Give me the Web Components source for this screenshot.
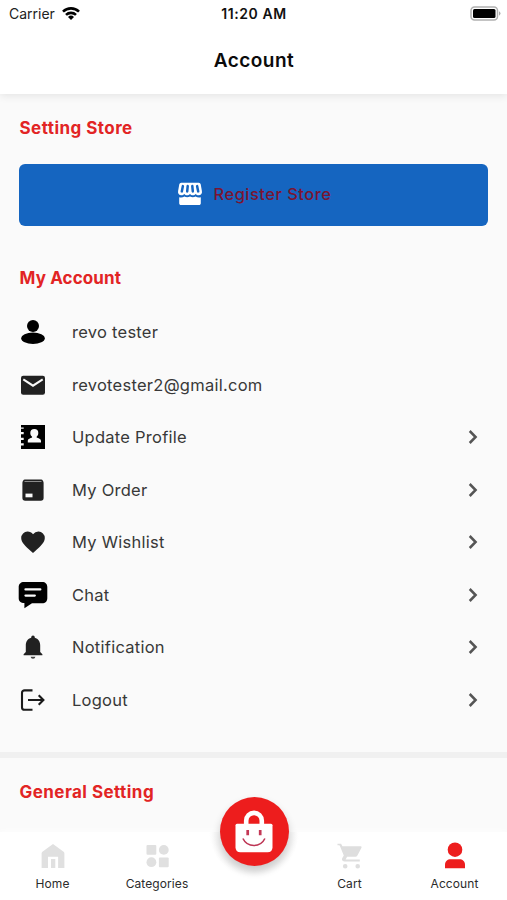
<!DOCTYPE html>
<html lang="en">
<head>
<meta charset="utf-8">
<meta name="viewport" content="width=device-width, initial-scale=1">
<title>Account</title>
<style>
html, body {
    margin: 0;
    height: 100%;
    overflow: hidden;
}
body {
    font-family: Inter, Roboto, "Liberation Sans", sans-serif;
    background: #fafafa;
    color: #333;
}
</style>
</head>
<body>
<account-page></account-page>

<script>
const icons = {
    user: `<g fill="#000"><circle cx="14" cy="8" r="6"/><ellipse cx="14" cy="20.300" rx="11.800" ry="5.700"/></g>`,
    mail: `<rect x="2" y="4.700" width="24" height="19" rx="2.200" fill="#212121"/><path d="M4.300 8.400 14 14.700l9.700-6.300" fill="none" stroke="#fafafa" stroke-width="2"/>`,
    profile: `<path d="M2 2h24v24H2v-3.500h2.700v-2.200H2v-3.400h2.700v-2.200H2v-3.400h2.700V9H2V5.800h2.700V4.600H2z" fill="#000"/><path d="M15.300 6a4 4 0 0 1 4 4c0 1.800-.8 3-1.700 3.800v.8c1.600.7 4.400 1.200 4.400 3.400v1.600H8.800V18c0-2.200 2.800-2.700 4.300-3.400v-.8c-1-.8-1.800-2-1.800-3.800a4 4 0 0 1 4-4z" fill="#fafafa"/>`,
    order: `<path d="M5.800 3.600h16.400c1.400 0 2.400 2 2.400 3.200V22c0 1.800-1 2.700-2.700 2.700H6.200c-1.800 0-2.800-.9-2.800-2.700V6.800c0-1.200 1-3.200 2.400-3.200z" fill="#212121"/><path d="M5.500 5.500h17" stroke="#a8a8a8" stroke-width=".8"/><rect x="6.500" y="17.600" width="7" height="3.700" fill="#fafafa"/>`,
    heart: `<path d="M14 25.100 12.300 23.600C6.200 18 2.200 14.400 2.200 10A6.300 6.300 0 0 1 8.600 3.600c2.100 0 4.100 1 5.400 2.600a7.200 7.200 0 0 1 5.400-2.600 6.300 6.300 0 0 1 6.400 6.400c0 4.400-4 8-10.100 13.600z" fill="#212121"/>`,
    chat: `<path d="M5 .9h18.300c3 0 5 2 5 5v11.300c0 3-2 5-5 5H13l-7.600 5v-5.100C1.700 22.100-.3 20-.3 17.200V5.900C-.3 2.900 1.800.9 5 .9z" fill="#000"/><path d="M6.500 8.400h14.800M6.500 14.600h9.300" stroke="#fafafa" stroke-width="2.300" stroke-linecap="round"/>`,
    bell: `<path d="M14 25.800a2.400 2.400 0 0 0 2.400-2.100h-4.800a2.400 2.400 0 0 0 2.400 2.100z" fill="#444"/><path d="M21.200 19v-6.700c0-3.900-2-6.800-5.400-7.600v-.3a1.800 1.800 0 0 0-3.600 0v.3c-3.400.8-5.400 3.700-5.400 7.600V19l-2.200 2.200v1h18.800v-1z" fill="#212121"/>`,
    logout: `<path d="M13.500 4.400H5.600C4 4.400 3 5.200 3 6.700v14.700c0 1.500 1 2.300 2.600 2.300h7.900M9 14h15.500M19.700 9.300l4.700 4.700-4.700 4.700" fill="none" stroke="#1a1a1a" stroke-width="2.100"/>`,
    store: `<path d="M5.300 2.700h17.400a2 2 0 0 1 2 1.600l1.200 6.600c.5 2.500-.9 4.300-3.300 4.300-1.200 0-2.200-.5-2.900-1.300-.7.800-1.700 1.300-2.900 1.300S14.700 14.700 14 13.900c-.7.800-1.700 1.300-2.900 1.300s-2.100-.5-2.800-1.300c-.7.800-1.700 1.300-2.900 1.300-2.400 0-3.800-1.800-3.300-4.300l1.200-6.600a2 2 0 0 1 2-1.600z" fill="#fff"/><path d="m6.900 6.100-1.100 5.300M11.700 6.100l-.5 5.300M16.300 6.100l.5 5.300M21.100 6.100l1.100 5.300" stroke="#1565c0" stroke-width="2.500" stroke-linecap="round"/><path d="M3.200 17.300c2 .5 3.800.2 5.200-.8 1.700 1 3.900 1 5.600 0 1.700 1 3.900 1 5.600 0 1.500 1 3.300 1.300 5.200.8v5.900c0 1.100-.7 1.800-1.800 1.800H5c-1.100 0-1.800-.7-1.800-1.800z" fill="#fff"/>`,
    next: `<path d="m9.700 8 5.900 6-5.900 6" fill="none" stroke="#555" stroke-width="2.500"/>`,
    home: `<path d="M14 2 24.600 9.700q.8.700.8 1.800V26h-6.300V14.700H9V26H2.600V11.500q0-1.100.8-1.800zM12 17h4.300v9H12z" fill="#e0e0e0"/>`,
    categories: `<g fill="#e0e0e0"><rect x="3.500" y="3" width="9.800" height="9.800" rx="1"/><circle cx="20.800" cy="7.900" r="4.900"/><circle cx="8.400" cy="20.200" r="4.900"/><rect x="15.900" y="15.400" width="9.800" height="9.800" rx="1"/></g>`,
    cart: `<path d="M1.500 1.800h3.600l1.300 2.400h18.400q1.200.2.700 1.500l-4.100 7.800q-.7 1.300-2.100 1.300h-8.200l-1.500 2.600h14.200v2H8.300c-2.100 0-2.900-1.700-2-3.300l1.500-2.700L3.900 4 3.300 3.200H1.500zM9.200 22a2.300 2.300 0 1 1 0 4.600 2.300 2.300 0 0 1 0-4.600zM21.700 22a2.300 2.300 0 1 1 0 4.600 2.300 2.300 0 0 1 0-4.600z" fill="#dedede"/>`,
    account: `<g fill="#ed1d1d"><circle cx="14" cy="7.700" r="7.300"/><path d="M4 26.300v-3.500C4 19.300 6.500 17.300 9.700 17.300h8.600c3.200 0 5.700 2 5.700 5.500v3.500z"/></g>`
};

class AppIcon extends HTMLElement {
    constructor() {
        super();
        this.attachShadow({ mode: "open" });
    }

    connectedCallback() {
        this.shadowRoot.innerHTML = `
        <style>
        :host { display: block; flex: none; width: 28px; height: 28px; }
        svg { display: block; width: 100%; height: 100%; overflow: visible; }
        </style>
        <svg viewBox="0 0 28 28" aria-hidden="true">${icons[this.getAttribute("name")]}</svg>
        `;
    }
}
customElements.define("app-icon", AppIcon);

class StatusBar extends HTMLElement {
    constructor() {
        super();
        this.attachShadow({ mode: "open" }).innerHTML = `
        <style>
        :host {
            display: grid;
            grid-template-columns: 1fr auto 1fr;
            align-items: center;
            height: 28px;
            padding: 0 7px 0 8px;
            box-sizing: border-box;
            color: #222;
            font-size: 14px;
            line-height: 28px;
        }
        .carrier { display: flex; align-items: center; gap: 7px; margin-left: 1px; }
        .carrier svg { margin-top: -2px; }
        .time { color: #111; font-size: 14px; font-weight: 600; letter-spacing: .55px; }
        .battery { justify-self: end; margin: -2px -1px 0 0; }
        svg { display: block; }
        </style>
        <div class="carrier">
            <span>Carrier</span>
            <svg width="18" height="15" viewBox="0 0 18 15" fill="none" stroke="#000" stroke-width="2.600">
                <path d="M1 5.600a11.500 11.500 0 0 1 16 0M4 8.900a7.200 7.200 0 0 1 10 0"/>
                <path d="m9 14-3-3a4.300 4.300 0 0 1 6 0z" fill="#000" stroke="none"/>
            </svg>
        </div>
        <div class="time">11:20 AM</div>
        <svg class="battery" width="31" height="15" viewBox="0 0 31 15">
            <rect x="1" y="1" width="26.500" height="13" rx="3.500" fill="#fff" stroke="#b0b0b0" stroke-width="1.500"/>
            <rect x="3" y="3" width="22.500" height="9" rx="1.500" fill="#000"/>
            <path d="M29 5.300q3 2.200 0 4.400z" fill="#aaa"/>
        </svg>
        `;
    }
}
customElements.define("status-bar", StatusBar);

class PageHeader extends HTMLElement {
    constructor() {
        super();
        this.attachShadow({ mode: "open" }).innerHTML = `
        <style>
        :host {
            display: block;
            flex: none;
            height: 94px;
            background: #fff;
            box-shadow: 0 2px 8px rgba(0, 0, 0, .09);
            z-index: 1;
        }
        h1 {
            margin: 0 0 0 1px;
            color: #0b0b0b;
            font-size: 19px;
            font-weight: 600;
            letter-spacing: .45px;
            line-height: 65px;
            text-align: center;
        }
        </style>
        <status-bar></status-bar>
        <h1><slot></slot></h1>
        `;
    }
}
customElements.define("page-header", PageHeader);

class SectionTitle extends HTMLElement {
    constructor() {
        super();
        this.attachShadow({ mode: "open" }).innerHTML = `
        <style>
        :host { display: block; }
        h2 {
            margin: 0 0 0 .5px;
            color: #e22424;
            font-size: 17px;
            font-weight: 650;
            letter-spacing: var(--title-spacing, .45px);
            line-height: 25px;
        }
        </style>
        <h2><slot></slot></h2>
        `;
    }
}
customElements.define("section-title", SectionTitle);

class StoreButton extends HTMLElement {
    constructor() {
        super();
        this.attachShadow({ mode: "open" }).innerHTML = `
        <style>
        :host { display: block; }
        button {
            display: flex;
            align-items: center;
            justify-content: center;
            gap: 10px;
            width: 100%;
            height: 62px;
            padding: 0 0 1px;
            border: 0;
            border-radius: 6px;
            background: #1565c0;
            color: #7b1431;
            font: 500 16.500px/24px Inter, Roboto, sans-serif;
            letter-spacing: .48px;
        }
        </style>
        <button><app-icon name="store"></app-icon><slot></slot></button>
        `;
    }
}
customElements.define("store-button", StoreButton);

class MenuItem extends HTMLElement {
    constructor() {
        super();
        this.attachShadow({ mode: "open" });
    }

    connectedCallback() {
        this.shadowRoot.innerHTML = `
        <style>
        :host {
            display: flex;
            align-items: center;
            height: 52.5px;
            color: #383838;
            font-size: 16.500px;
            letter-spacing: .26px;
        }
        .label { flex: 1; margin-left: 25px; line-height: 24px; }
        </style>
        <app-icon name="${this.getAttribute("icon")}"></app-icon>
        <span class="label"><slot></slot></span>
        ${this.hasAttribute("link") ? `<app-icon name="next"></app-icon>` : ""}
        `;
    }
}
customElements.define("menu-item", MenuItem);

class NavItem extends HTMLElement {
    constructor() {
        super();
        this.attachShadow({ mode: "open" });
    }

    connectedCallback() {
        this.shadowRoot.innerHTML = `
        <style>
        :host {
            display: flex;
            flex-direction: column;
            align-items: center;
            gap: 6px;
            padding-top: 10px;
            color: #2b2b2b;
            font-size: 12px;
            line-height: 16px;
            letter-spacing: .08px;
        }
        </style>
        <app-icon name="${this.getAttribute("icon")}"></app-icon>
        <span><slot></slot></span>
        `;
    }
}
customElements.define("nav-item", NavItem);

class BottomNav extends HTMLElement {
    constructor() {
        super();
        this.attachShadow({ mode: "open" }).innerHTML = `
        <style>
        :host {
            position: absolute;
            inset: auto 0 0;
            height: 68px;
            z-index: 2;
        }
        /* the gradient is the notch round the shop button */
        nav {
            display: grid;
            grid-template-columns: 105px 104px 88px 105px 105px;
            height: 100%;
            background: radial-gradient(circle at 254px 0, #f8f8f8 39px, #fff 45px);
            box-shadow: 0 -1px 6px rgba(255, 255, 255, .8);
        }
        .shop {
            width: 69px;
            height: 69px;
            margin: -35px 0 0 10.5px;
            border-radius: 50%;
            background: #ed1d1d;
            box-shadow: 0 5px 9px rgba(0, 0, 0, .2);
        }
        svg { display: block; width: 69px; height: 69px; }
        </style>
        <nav>
            <nav-item icon="home">Home</nav-item>
            <nav-item icon="categories">Categories</nav-item>
            <div class="shop">
                <svg viewBox="0 0 69 69" aria-label="Shop">
                    <path d="M26.200 29v-5.300a7.800 7.800 0 0 1 15.600 0V29" fill="none" stroke="#fff" stroke-width="4.600"/>
                    <path d="M17 26.800h34q1.500 0 1.500 1.500v22q0 5-5 5H20.500q-5 0-5-5v-22q0-1.500 1.500-1.500z" fill="#fff"/>
                    <path d="M27.700 33v5.300M40.200 33v5.300" stroke="#c43755" stroke-width="2.700"/>
                    <path d="M22.900 41.500c4.500 9.300 17.500 9.300 22 0" fill="none" stroke="#bd3554" stroke-width="1.600"/>
                </svg>
            </div>
            <nav-item icon="cart">Cart</nav-item>
            <nav-item icon="account">Account</nav-item>
        </nav>
        `;
    }
}
customElements.define("bottom-nav", BottomNav);

class AccountPage extends HTMLElement {
    constructor() {
        super();
        this.attachShadow({ mode: "open" }).innerHTML = `
        <style>
        :host {
            position: relative;
            display: flex;
            flex-direction: column;
            height: 900px;
            overflow: hidden;
            background: #fafafa;
        }
        main { display: flex; flex-direction: column; }
        section { padding: 0 19px; }
        .store { padding-top: 22px; }
        store-button { margin-top: 22.5px; }
        .account { padding-top: 40.5px; --title-spacing: .12px; }
        .menu { padding-top: 15px; }
        .divider { height: 6px; margin-top: 26px; background: #f0f0f0; }
        .general { padding-top: 22px; }
        </style>
        <page-header>Account</page-header>
        <main>
            <section class="store">
                <section-title>Setting Store</section-title>
                <store-button>Register Store</store-button>
            </section>
            <section class="account">
                <section-title>My Account</section-title>
                <div class="menu">
                    <menu-item icon="user">revo tester</menu-item>
                    <menu-item icon="mail">revotester2@gmail.com</menu-item>
                    <menu-item icon="profile" link>Update Profile</menu-item>
                    <menu-item icon="order" link>My Order</menu-item>
                    <menu-item icon="heart" link>My Wishlist</menu-item>
                    <menu-item icon="chat" link>Chat</menu-item>
                    <menu-item icon="bell" link>Notification</menu-item>
                    <menu-item icon="logout" link>Logout</menu-item>
                </div>
            </section>
            <div class="divider"></div>
            <section class="general">
                <section-title>General Setting</section-title>
            </section>
        </main>
        <bottom-nav></bottom-nav>
        `;
    }
}
customElements.define("account-page", AccountPage);
</script>
</body>
</html>
